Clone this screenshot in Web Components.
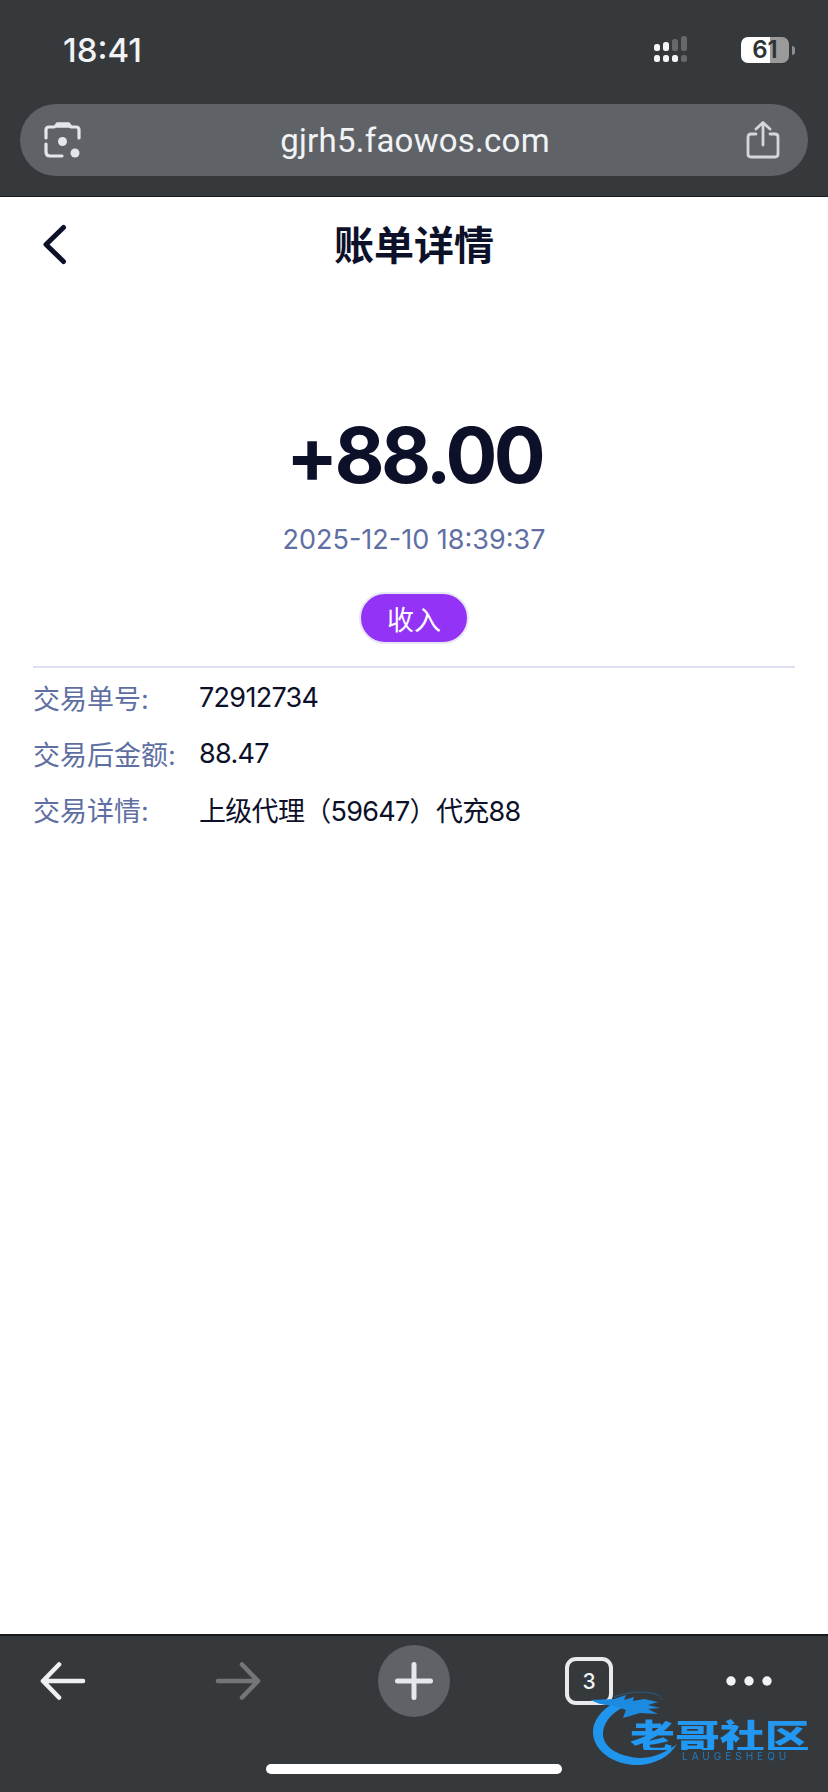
<!DOCTYPE html>
<html lang="zh">
<head>
<meta charset="utf-8">
<title>账单详情</title>
<style>
  html, body { margin: 0; height: 100%; background: #fff; }
  body { font-family: Inter, "Noto Sans CJK SC", sans-serif; }
  bill-page { height: 1792px; }
</style>
</head>
<body>
<bill-page>
  <browser-top slot="top" time="18:41" url="gjrh5.faowos.com"></browser-top>
  <bill-detail amount="+88.00" date="2025-12-10 18:39:37" tag="收入">
    <bill-row label="交易单号:">72912734</bill-row>
    <bill-row label="交易后金额:">88.47</bill-row>
    <bill-row label="交易详情:">上级代理&#xFF08;59647&#xFF09;代充88</bill-row>
  </bill-detail>
  <browser-bottom slot="bottom"></browser-bottom>
</bill-page>

<script>
class BillPage extends HTMLElement {
  constructor() {
    super();
    this.shadow = this.attachShadow({ mode: 'open' });
  }
  connectedCallback() {
    this.shadow.innerHTML = /*html*/`
    <style>
      :host { display: flex; flex-direction: column; }
      main { flex: 1; display: flex; flex-direction: column; min-height: 0; }
    </style>
    <slot name="top"></slot>
    <main><slot></slot></main>
    <slot name="bottom"></slot>
    `
  }
}

class BrowserTop extends HTMLElement {
  constructor() {
    super();
    this.shadow = this.attachShadow({ mode: 'open' });
  }
  connectedCallback() {
    this.shadow.innerHTML = /*html*/`
    <style>
      :host {
        display: block;
        background: #36393c;
        border-bottom: 1px solid #17191b;
        height: 197px;
        box-sizing: border-box;
        padding: 0 20px;
        font-family: Inter, sans-serif;
      }
      .status {
        height: 104px;
        display: flex;
        align-items: center;
        padding: 0 0 5px 43px;
        box-sizing: border-box;
        color: #f1f3f5;
      }
      .time { font-size: 33px; font-weight: 500; flex: 1; }
      .signal { width: 34px; height: 27px; display: block; margin-right: 53px; }
      .battery {
        position: relative;
        display: block;
        width: 48px;
        height: 26px;
        border-radius: 7px;
        background: linear-gradient(90deg, #fff 0, #fff 60%, #9a9a9a 60%);
        color: #2f3235;
        font-size: 24px;
        font-weight: 600;
        line-height: 26px;
        text-align: center;
        margin-right: 19px;
      }
      .battery::after {
        content: "";
        position: absolute;
        left: 51px;
        top: 9px;
        width: 3px;
        height: 9px;
        background: #8b8d8f;
        border-radius: 0 4px 4px 0;
      }
      .bar {
        height: 72px;
        border-radius: 36px;
        background: #5f6367;
        display: flex;
        align-items: center;
        justify-content: space-between;
        padding: 0 28px 0 24px;
        color: #f1f3f5;
      }
      .url { font-family: Roboto, sans-serif; font-size: 33px; letter-spacing: .25px; margin-left: 2px; }
      svg { display: block; }
    </style>
    <div class="status">
      <span class="time">${this.getAttribute("time")}</span>
      <svg class="signal" viewBox="0 0 34 27">
        <g fill="#f5f6f7">
          <rect x="0" y="8" width="6" height="7" rx="2.5"/><rect x="9" y="6" width="6" height="9" rx="2.5"/>
          <rect x="0" y="19" width="6" height="7" rx="2.5"/><rect x="9" y="19" width="6" height="7" rx="2.5"/><rect x="18" y="19" width="6" height="7" rx="2.5"/>
        </g>
        <g fill="#66696c">
          <rect x="18" y="3" width="6" height="12" rx="2.5"/><rect x="27" y="0" width="6" height="15" rx="2.5"/>
          <rect x="27" y="19" width="6" height="7" rx="2.5"/>
        </g>
      </svg>
      <span class="battery">61</span>
    </div>
    <div class="bar">
      <svg width="38" height="38" viewBox="0 0 38 38" fill="none" stroke="#e3e6ea" stroke-width="3.2" stroke-linecap="round" stroke-linejoin="round">
        <path d="M2 17V9q0-3 3-3h5"/>
        <path d="M27 6h5q3 0 3 3v8"/>
        <path d="M2 23v8q0 4 4 4h12"/>
        <path d="M10 6l3-4h12l3 4z" fill="#e3e6ea" stroke-width="1.500"/>
        <circle cx="18.500" cy="20.500" r="4.500" fill="#e3e6ea" stroke="none"/>
        <circle cx="31" cy="32" r="4.500" fill="#e3e6ea" stroke="none"/>
      </svg>
      <span class="url">${this.getAttribute("url")}</span>
      <svg width="34" height="38" viewBox="0 0 34 38" fill="none" stroke="#d3d6da" stroke-width="2.800" stroke-linecap="round" stroke-linejoin="round">
        <path d="M10 13H5q-3 0-3 3v17q0 3 3 3h24q3 0 3-3V16q0-3-3-3h-5"/>
        <path d="M17 24V2M10 8l7-6.500L24 8"/>
      </svg>
    </div>
    `
  }
}

class BillDetail extends HTMLElement {
  constructor() {
    super();
    this.shadow = this.attachShadow({ mode: 'open' });
  }
  connectedCallback() {
    this.shadow.innerHTML = /*html*/`
    <style>
      :host {
        display: block;
        font-family: Inter, "Noto Sans CJK SC", sans-serif;
        color: #0c1029;
      }
      header {
        position: relative;
        height: 95px;
        display: flex;
        align-items: center;
        justify-content: center;
      }
      h1 {
        margin: 0 0 3px;
        font-size: 40px;
        font-weight: 700;
        font-family: "Noto Sans CJK SC", sans-serif;
        line-height: 92px;
      }
      header svg { position: absolute; left: 40px; top: 25px; }
      .summary {
        display: flex;
        flex-direction: column;
        align-items: center;
        padding-top: 117px;
      }
      .amount { font-size: 77px; font-weight: 650; line-height: 92px; letter-spacing: -3.700px; }
      .date { font-size: 27px; color: #5f6fa3; line-height: 34px; margin-top: 22px; }
      .tag {
        margin-top: 35px;
        box-sizing: border-box;
        width: 110px;
        height: 52px;
        border: 2px solid #e6e7f3;
        border-radius: 26px;
        background: #9333f5;
        color: #fff;
        font-size: 27px;
        font-family: "Noto Sans CJK SC", sans-serif;
        display: flex;
        align-items: center;
        justify-content: center;
      }
      hr {
        margin: 22px 33px 0;
        border: 0;
        height: 2px;
        background: #dde0f0;
      }
      .rows { padding: 1px 33px 0; }
    </style>
    <header>
      <svg width="30" height="46" viewBox="0 0 30 46" fill="none" stroke="#0c1029" stroke-width="5" stroke-linecap="round" stroke-linejoin="round"><path d="M23.500 5.500L6 22.500L23.500 39.500"/></svg>
      <h1>账单详情</h1>
    </header>
    <div class="summary">
      <div class="amount">${this.getAttribute("amount")}</div>
      <div class="date">${this.getAttribute("date")}</div>
      <div class="tag">${this.getAttribute("tag")}</div>
    </div>
    <hr>
    <div class="rows"><slot></slot></div>
    `
  }
}

class BillRow extends HTMLElement {
  constructor() {
    super();
    this.shadow = this.attachShadow({ mode: 'open' });
  }
  connectedCallback() {
    this.shadow.innerHTML = /*html*/`
    <style>
      :host {
        display: flex;
        align-items: center;
        height: 56.3px;
        font-size: 27px;
        font-family: Inter, "Noto Sans CJK SC", sans-serif;
      }
      .label { width: 166px; color: #5f6fa3; white-space: nowrap; }
      .value { color: #0c1029; white-space: nowrap; letter-spacing: -0.7px; }
    </style>
    <span class="label">${this.getAttribute("label")}</span>
    <span class="value"><slot></slot></span>
    `
  }
}

class BrowserBottom extends HTMLElement {
  constructor() {
    super();
    this.shadow = this.attachShadow({ mode: 'open' });
  }
  connectedCallback() {
    this.shadow.innerHTML = /*html*/`
    <style>
      :host {
        display: block;
        position: relative;
        height: 158px;
        box-sizing: border-box;
        background: #36393c;
        border-top: 2px solid #17191b;
        font-family: Inter, sans-serif;
      }
      .tools {
        display: flex;
        align-items: center;
        height: 72px;
        margin-top: 9px;
        padding-left: 40px;
      }
      .fwd { margin-left: 129px; }
      .new {
        margin-left: 117px;
        width: 72px;
        height: 72px;
        border-radius: 50%;
        background: #5f6367;
        display: flex;
        align-items: center;
        justify-content: center;
      }
      .tabs {
        margin-left: 115px;
        box-sizing: border-box;
        width: 48px;
        height: 48px;
        border: 4px solid #e8eaed;
        border-radius: 11px;
        color: #f1f3f5;
        font-size: 21px;
        font-weight: 500;
        display: flex;
        align-items: center;
        justify-content: center;
      }
      .more { margin-left: 113px; }
      .home {
        width: 296px;
        height: 10px;
        border-radius: 5px;
        background: #fff;
        margin: 47px auto 0;
      }
      svg { display: block; }
      .mark {
        position: absolute;
        left: 590px;
        top: 60px;
        width: 235px;
        height: 90px;
        filter: blur(.6px);
      }
      .mark svg { position: absolute; left: 0; top: 0; overflow: visible; }
      .mark b {
        position: absolute;
        left: 40px;
        top: 23px;
        font-family: "Noto Sans CJK SC", sans-serif;
        font-weight: 900;
        font-size: 34px;
        line-height: 31px;
        white-space: nowrap;
        transform: scaleX(1.32);
        transform-origin: left top;
        background: linear-gradient(180deg, #2596ee, #1e9af8);
        -webkit-background-clip: text;
        background-clip: text;
        color: transparent;
      }
      .mark span {
        position: absolute;
        left: 92px;
        top: 55px;
        font-size: 10px;
        line-height: 10px;
        letter-spacing: 4px;
        color: #1e7cc4;
        white-space: nowrap;
      }
    </style>
    <div class="tools">
      <svg width="46" height="38" viewBox="0 0 46 38" fill="none" stroke="#eef0f2" stroke-width="4.600" stroke-linecap="round" stroke-linejoin="round"><path d="M43 19H3M19 2.500L3 19l16 16.500"/></svg>
      <svg class="fwd" width="46" height="38" viewBox="0 0 46 38" fill="none" stroke="#737578" stroke-width="4.600" stroke-linecap="round" stroke-linejoin="round"><path d="M3 19h40M27 2.500L43 19 27 35.500"/></svg>
      <div class="new">
        <svg width="38" height="38" viewBox="0 0 38 38" fill="none" stroke="#e6e7ea" stroke-width="5" stroke-linecap="round"><path d="M19 2.500v33M2.500 19h33"/></svg>
      </div>
      <div class="tabs">3</div>
      <svg class="more" width="46" height="12" viewBox="0 0 46 12" fill="#f1f3f5"><circle cx="5" cy="6" r="4.700"/><circle cx="23" cy="6" r="4.700"/><circle cx="41" cy="6" r="4.700"/></svg>
    </div>
    <div class="home"></div>
    <div class="mark">
      <svg width="235" height="90" viewBox="0 0 235 90" fill="none">
        <path d="M27 5C10 14 2 26 3 38C5 58 28 70 50 69C66 68 80 60 87 48C76 56 64 62 50 62C30 61 13 52 13 38C13 28 20 18 32 12Z" fill="#1f95ee"/>
        <path d="M0 4L24 3L36-1L34 4L44 1L43 5L54 3L68 6L58 9L70 12L58 13L68 18L50 17L40 20L33 22L36 14L24 10L10 8Z" fill="#1c8ade"/>
        <path d="M24 1C40-6 70-6 72 4" stroke="#2c5a7e" stroke-width="1"/>
      </svg>
      <b>老哥社区</b>
      <span>LAUGESHEQU</span>
    </div>
    `
  }
}

customElements.define('bill-page', BillPage);
customElements.define('browser-top', BrowserTop);
customElements.define('bill-detail', BillDetail);
customElements.define('bill-row', BillRow);
customElements.define('browser-bottom', BrowserBottom);
</script>
</body>
</html>
